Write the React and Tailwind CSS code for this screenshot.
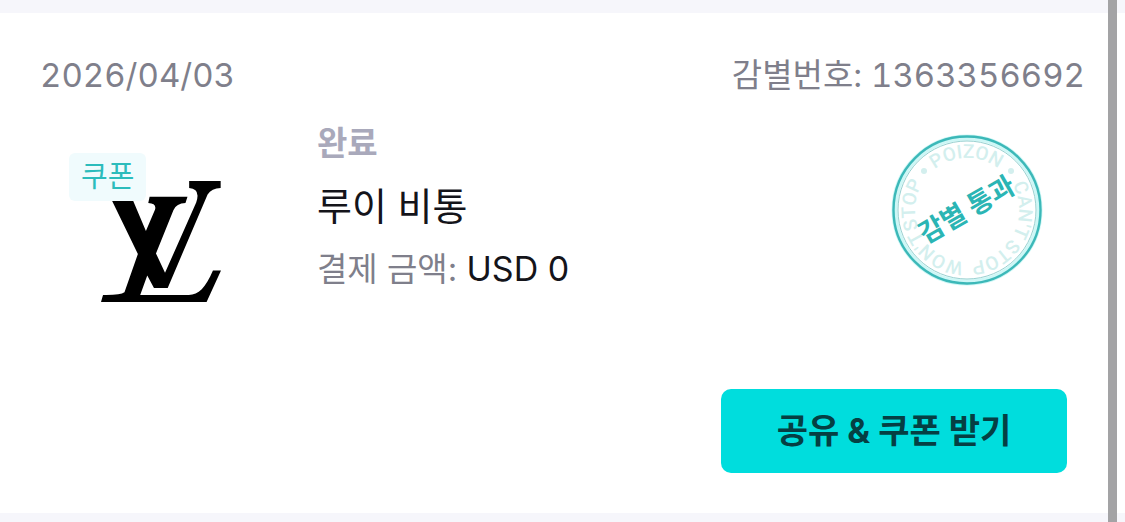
const order = {
    date: '2026/04/03',
    number: '1363356692',
    status: '완료',
    brand: '루이 비통',
    amount: 'USD 0',
};

// words around the stamp, offset is measured clockwise from the bottom
const stampWords = [
    { text: "WON'T", offset: '9.8%' },
    { text: 'STOP', offset: '26.4%' },
    { text: 'POIZON', offset: '49.8%' },
    { text: "CAN'T", offset: '75%' },
    { text: 'STOP', offset: '91.4%' },
];

function BrandLogo() {
    return (
        <svg viewBox="123 124 358 361" className="w-[120px] h-[121px]" role="img" aria-label="Louis Vuitton">
            <path d="M140 150H205L257 273L284 210Q290 191 264 190L268 171H381L375 190Q348 191 339 211L287 340L314 398L407 188Q421 147 386 145V124H480V145Q453 146 441 164L322 443H281L261 406L240 464H385C414 464 435 442 457 391H481L438 485H123L129 464Q181 465 193 456L233 342Z" />
        </svg>
    );
}

function Stamp() {
    return (
        <svg viewBox="0 0 152 152" className="w-[152px] h-[152px]" role="img" aria-label="감별 통과">
            <defs>
                <path id="stampRing" d="M76 128A52 52 0 0 1 76 24A52 52 0 0 1 76 128" />
            </defs>
            <circle cx="76" cy="76" r="72.5" fill="none" stroke="#cdf7f6" strokeWidth="6" />
            <circle cx="76" cy="76" r="73.5" fill="none" stroke="#3cb8b8" strokeWidth="2.4" />
            <circle cx="76" cy="76" r="69" fill="none" stroke="#7fc4c4" strokeWidth="0.8" />
            <g className="font-['Roboto',sans-serif] text-[19px] font-medium" fill="#d3efee" textAnchor="middle">
                {stampWords.map((word) => (
                    <text key={word.offset}>
                        <textPath href="#stampRing" startOffset={word.offset}>{word.text}</textPath>
                    </text>
                ))}
            </g>
            <circle cx="33" cy="37" r="3" fill="#d3efee" />
            <circle cx="120" cy="37" r="3" fill="#d3efee" />
            <text
                x="76"
                y="85"
                transform="rotate(-30 76 76)"
                textAnchor="middle"
                fill="#2bb5b4"
                className="font-['Noto_Sans_CJK_KR',sans-serif] text-[27px] font-bold"
            >
                감별 통과
            </text>
        </svg>
    );
}

function App() {
    return (
        <div className="min-h-screen bg-[#f6f6fb] pt-[13px] pb-2 font-['Inter','Noto_Sans_CJK_KR',sans-serif]">
            <main className="bg-white pt-[42px] pb-10 px-10">
                <header className="flex justify-between text-[33px] leading-10 tabular-nums text-[#7f7f8b]">
                    <time>{order.date}</time>
                    <p>감별번호: {order.number}</p>
                </header>

                <section className="flex pt-6">
                    <div className="relative w-[277px] shrink-0 pl-[61px] pt-[62px]">
                        <BrandLogo />
                        <span className="absolute left-[29px] top-[34px] rounded-md bg-[#f0fbfd] px-3 text-[29px] leading-[48px] text-[#2cbcbc]">
                            쿠폰
                        </span>
                    </div>

                    <div className="flex flex-1 flex-col gap-[15px] text-[33px] leading-[48px]">
                        <p className="font-bold text-[#a9a9bb]">{order.status}</p>
                        <h1 className="text-[38px] text-[#14141a]">{order.brand}</h1>
                        <p className="text-[#7f7f8b]">
                            결제 금액: <span className="text-[34px] text-[#14141a]">{order.amount}</span>
                        </p>
                    </div>

                    <div className="pt-[15px] pr-[42px]">
                        <Stamp />
                    </div>
                </section>

                <div className="flex justify-end pt-[87px] pr-[18px]">
                    <button
                        type="button"
                        className="w-[346px] rounded-[10px] bg-[#00dddd] text-[34px] font-bold leading-[84px] text-[#053f43]"
                    >
                        공유 &amp; 쿠폰 받기
                    </button>
                </div>
            </main>

            {/* scroll thumb */}
            <div className="fixed inset-y-0 right-2 w-[9px] bg-[#a3a3a5]" />
        </div>
    );
}

export default App;
